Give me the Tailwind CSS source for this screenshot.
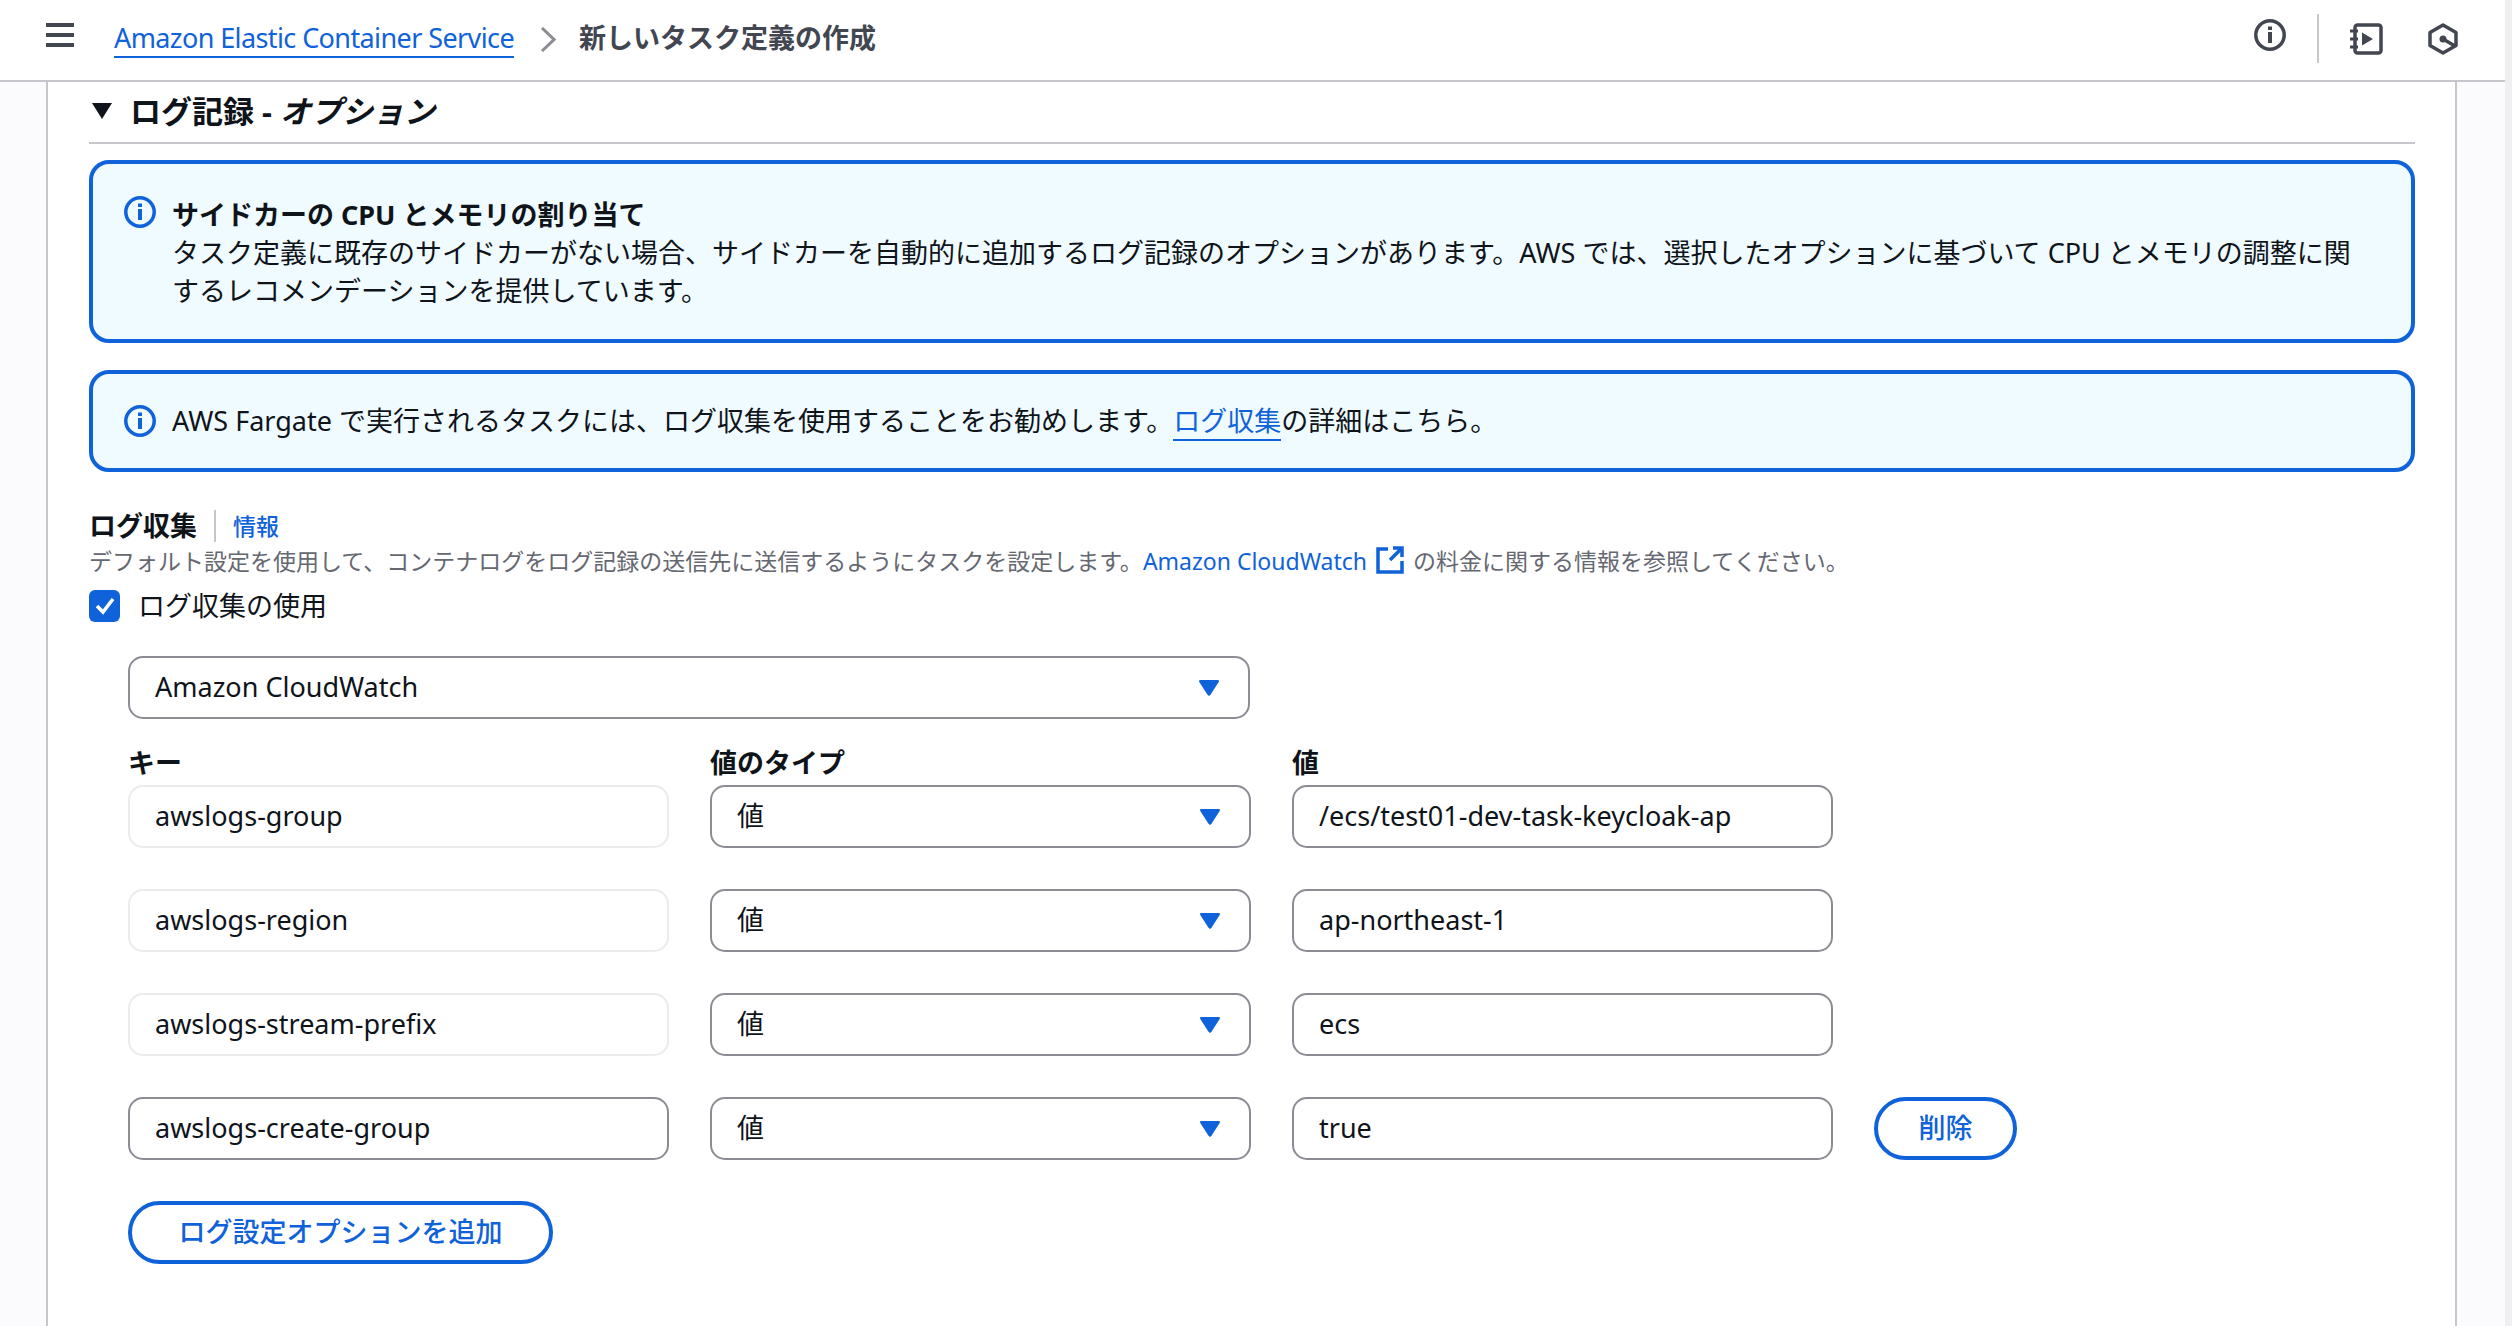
<!DOCTYPE html>
<html lang="ja">

<head>
    <meta charset="UTF-8">
    <title>新しいタスク定義の作成</title>
    <script src="https://cdn.jsdelivr.net/npm/@tailwindcss/browser@4"></script>
</head>

<body class="bg-white h-screen overflow-hidden flex font-['Noto_Sans','Noto_Sans_CJK_JP',sans-serif] text-[27px] text-[#0f141a]">
    <div class="flex-1 flex flex-col min-w-0">
        <!-- Top bar -->
        <header class="h-[82px] shrink-0 border-b-2 border-[#c6c6cd] flex items-start relative">
            <button class="w-[28px] h-[24px] ml-[46px] mt-[23px] flex flex-col justify-between">
                <span class="block h-[4px] bg-[#424650]"></span>
                <span class="block h-[4px] bg-[#424650]"></span>
                <span class="block h-[4px] bg-[#424650]"></span>
            </button>
            <a href="#" class="ml-[40px] mt-[19px] h-[39px] leading-[38px] text-[#0f62d9] border-b-2 border-[#0f62d9] whitespace-nowrap tracking-[-0.6px]">Amazon Elastic Container Service</a>
            <svg class="ml-[26px] mt-[27px]" width="16" height="25" viewBox="0 0 16 25" fill="none" stroke="#8c8c94" stroke-width="3"><path d="M2 1l12 11.500L2 24" /></svg>
            <span class="ml-[23px] mt-[19px] leading-[38px] font-bold text-[#424650] whitespace-nowrap">新しいタスク定義の作成</span>
            <div class="ml-auto flex items-start">
                <svg class="mt-[19px]" width="32" height="32" viewBox="0 0 32 32" fill="none"><circle cx="16" cy="16" r="14.200" stroke="#424650" stroke-width="3.500" /><rect x="14" y="13" width="4" height="11" fill="#424650" /><rect x="14" y="7.500" width="4" height="3.500" fill="#424650" /></svg>
                <div class="w-[2px] h-[49px] mt-[14px] ml-[31px] bg-[#c6c6cd]"></div>
                <svg class="mt-[23px] ml-[30px]" width="34" height="32" viewBox="0 0 34 32" fill="none" stroke="#424650" stroke-width="3.500"><rect x="6" y="2" width="26" height="28" rx="2.500" /><path d="M1 8h8M1 16h8M1 24h8" stroke-width="3" /><path d="M13 9.500v13l11-6.500z" fill="#424650" stroke="none" /></svg>
                <svg class="mt-[23px] ml-[45px] mr-[47px]" width="30" height="32" viewBox="0 0 30 32" fill="none" stroke="#424650" stroke-width="3.500"><path d="M15 2l13 7.500v13L15 30 2 22.500v-13z" stroke-linejoin="round" /><circle cx="15" cy="16" r="3.500" fill="#424650" stroke="none" /><path d="M15 16l12 7" /></svg>
            </div>
        </header>

        <div class="flex-1 flex min-h-0">
            <div class="w-[46px] shrink-0 bg-[#fbfbfd] border-r-2 border-[#c6c6cd] box-content"></div>
            <main class="flex-1 min-w-0 pl-[41px] pr-[40px]">
                <!-- Section heading -->
                <div class="h-[62px] border-b-2 border-[#c6c6cd] flex items-center pb-[2px]">
                    <span class="w-0 h-0 border-x-[10px] border-x-transparent border-t-[16px] border-t-[#0f141a] ml-[3px]"></span>
                    <h2 class="ml-[18px] text-[31px] leading-[38px] font-bold whitespace-nowrap">ログ記録 - <em class="italic">オプション</em></h2>
                </div>

                <!-- Alerts -->
                <div class="mt-[16px] h-[183px] rounded-[20px] border-4 border-[#0f62d9] bg-[#f0fbff] flex pl-[31px] pr-[40px] pt-[32px]">
                    <svg class="shrink-0 mt-[0px]" width="32" height="32" viewBox="0 0 32 32" fill="none"><circle cx="16" cy="16" r="14.200" stroke="#0f62d9" stroke-width="3.500" /><rect x="14" y="13" width="4" height="11" fill="#0f62d9" /><rect x="14" y="7.500" width="4" height="3.500" fill="#0f62d9" /></svg>
                    <div class="ml-[16px] leading-[38px]">
                        <p class="font-bold">サイドカーの CPU とメモリの割り当て</p>
                        <p>タスク定義に既存のサイドカーがない場合、サイドカーを自動的に追加するログ記録のオプションがあります。AWS では、選択したオプションに基づいて CPU とメモリの調整に関するレコメンデーションを提供しています。</p>
                    </div>
                </div>
                <div class="mt-[27px] h-[102px] rounded-[20px] border-4 border-[#0f62d9] bg-[#f0fbff] flex items-center pl-[31px]">
                    <svg class="shrink-0" width="32" height="32" viewBox="0 0 32 32" fill="none"><circle cx="16" cy="16" r="14.200" stroke="#0f62d9" stroke-width="3.500" /><rect x="14" y="13" width="4" height="11" fill="#0f62d9" /><rect x="14" y="7.500" width="4" height="3.500" fill="#0f62d9" /></svg>
                    <p class="ml-[16px]">AWS Fargate で実行されるタスクには、ログ収集を使用することをお勧めします。<a href="#" class="text-[#0f62d9] border-b-2 border-[#0f62d9]">ログ収集</a>の詳細はこちら。</p>
                </div>

                <!-- Log collection -->
                <div class="mt-[37px] flex items-center h-[34px]">
                    <span class="font-bold leading-[34px]">ログ収集</span>
                    <span class="w-[2px] h-[32px] bg-[#c6c6cd] ml-[17px]"></span>
                    <a href="#" class="ml-[17px] text-[23px] font-medium text-[#0f62d9]">情報</a>
                </div>
                <p class="text-[23px] leading-[36px] text-[#656871] whitespace-nowrap">デフォルト設定を使用して、コンテナログをログ記録の送信先に送信するようにタスクを設定します。<a href="#" class="text-[#0f62d9]">Amazon CloudWatch</a><svg class="inline-block mx-[9px] align-[-4px]" width="28" height="28" viewBox="0 0 28 28" fill="none" stroke="#0f62d9" stroke-width="3.500"><path d="M12 3H2v23h24V15" /><path d="M14 14L25 3M17 2h9v9" /></svg>の料金に関する情報を参照してください。</p>
                <label class="mt-[8px] flex items-center h-[38px]">
                    <span class="w-[31px] h-[32px] rounded-[6px] bg-[#0f62d9] flex items-center justify-center">
                        <svg width="20" height="18" viewBox="0 0 20 18" fill="none" stroke="#fff" stroke-width="3.500"><path d="M2 9l6 6L18 2" /></svg>
                    </span>
                    <span class="ml-[18px]">ログ収集の使用</span>
                </label>

                <div class="ml-[39px] mt-[31px]">
                    <div class="w-[1122px] h-[63px] rounded-[15px] border-2 border-[#8c8c94] flex items-center justify-between pl-[25px] pr-[29px]">
                        <span>Amazon CloudWatch</span>
                        <svg width="20" height="16" viewBox="0 0 20 16" fill="#0f62d9"><path d="M1.500 0h17c1.200 0 1.800 1 1.200 2L11.300 15c-.6.900-2 .900-2.600 0L.3 2C-.3 1 .3 0 1.500 0z" /></svg>
                    </div>

                    <!-- Key / value table -->
                    <div class="grid grid-cols-[541px_541px_541px_auto] gap-x-[41px] gap-y-[41px] mt-[25px] items-center">
                        <div class="col-span-4 grid grid-cols-[541px_541px_541px] gap-x-[41px] h-[36px] -mb-[38px] font-bold leading-[36px]">
                            <span>キー</span><span>値のタイプ</span><span>値</span>
                        </div>
                        <div class="h-[63px] rounded-[15px] border-2 border-[#e9ebed] flex items-center pl-[25px]">awslogs-group</div>
                        <div class="h-[63px] rounded-[15px] border-2 border-[#8c8c94] flex items-center justify-between pl-[25px] pr-[29px]">値<svg width="20" height="16" viewBox="0 0 20 16" fill="#0f62d9"><path d="M1.500 0h17c1.200 0 1.800 1 1.200 2L11.300 15c-.6.900-2 .900-2.600 0L.3 2C-.3 1 .3 0 1.500 0z" /></svg></div>
                        <div class="h-[63px] rounded-[15px] border-2 border-[#8c8c94] flex items-center pl-[25px]">/ecs/test01-dev-task-keycloak-ap</div>
                        <div></div>

                        <div class="h-[63px] rounded-[15px] border-2 border-[#e9ebed] flex items-center pl-[25px]">awslogs-region</div>
                        <div class="h-[63px] rounded-[15px] border-2 border-[#8c8c94] flex items-center justify-between pl-[25px] pr-[29px]">値<svg width="20" height="16" viewBox="0 0 20 16" fill="#0f62d9"><path d="M1.500 0h17c1.200 0 1.800 1 1.200 2L11.300 15c-.6.900-2 .900-2.600 0L.3 2C-.3 1 .3 0 1.500 0z" /></svg></div>
                        <div class="h-[63px] rounded-[15px] border-2 border-[#8c8c94] flex items-center pl-[25px]">ap-northeast-1</div>
                        <div></div>

                        <div class="h-[63px] rounded-[15px] border-2 border-[#e9ebed] flex items-center pl-[25px]">awslogs-stream-prefix</div>
                        <div class="h-[63px] rounded-[15px] border-2 border-[#8c8c94] flex items-center justify-between pl-[25px] pr-[29px]">値<svg width="20" height="16" viewBox="0 0 20 16" fill="#0f62d9"><path d="M1.500 0h17c1.200 0 1.800 1 1.200 2L11.300 15c-.6.900-2 .900-2.600 0L.3 2C-.3 1 .3 0 1.500 0z" /></svg></div>
                        <div class="h-[63px] rounded-[15px] border-2 border-[#8c8c94] flex items-center pl-[25px]">ecs</div>
                        <div></div>

                        <div class="h-[63px] rounded-[15px] border-2 border-[#8c8c94] flex items-center pl-[25px]">awslogs-create-group</div>
                        <div class="h-[63px] rounded-[15px] border-2 border-[#8c8c94] flex items-center justify-between pl-[25px] pr-[29px]">値<svg width="20" height="16" viewBox="0 0 20 16" fill="#0f62d9"><path d="M1.500 0h17c1.200 0 1.800 1 1.200 2L11.300 15c-.6.900-2 .900-2.600 0L.3 2C-.3 1 .3 0 1.500 0z" /></svg></div>
                        <div class="h-[63px] rounded-[15px] border-2 border-[#8c8c94] flex items-center pl-[25px]">true</div>
                        <button class="w-[143px] h-[63px] rounded-[32px] border-4 border-[#0f62d9] text-[#0f62d9] font-medium">削除</button>
                    </div>

                    <button class="mt-[41px] w-[425px] h-[63px] rounded-[32px] border-4 border-[#0f62d9] text-[#0f62d9] font-medium whitespace-nowrap">ログ設定オプションを追加</button>
                </div>
            </main>
            <div class="w-[48px] shrink-0 bg-[#fbfbfd] border-l-2 border-[#c6c6cd] box-content"></div>
        </div>
    </div>
    <!-- Scrollbar track -->
    <div class="w-[7px] shrink-0 bg-[#efeff1]"></div>
</body>

</html>
